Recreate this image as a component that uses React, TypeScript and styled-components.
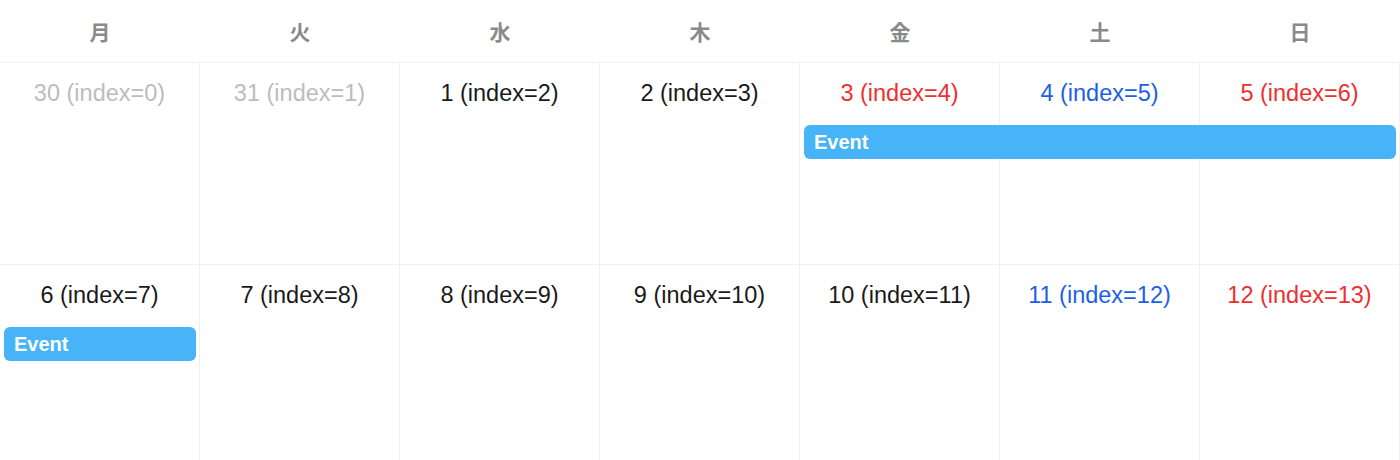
import React from 'react';
import styled, { createGlobalStyle } from 'styled-components';

type Tone = 'muted' | 'normal' | 'sat' | 'sun';

interface DayInfo {
    day: number,
    tone: Tone
}

interface EventInfo {
    start: number,
    span: number,
    title: string
}

const GlobalStyle = createGlobalStyle`
    html, body {
        margin: 0;
        padding: 0;
        background: #ffffff;
    }
    body {
        font-family: "Liberation Sans", Arial, "Noto Sans CJK JP", sans-serif;
    }
`

const Calendar = styled.div`
    width: 1400px;
`

const HeaderRow = styled.div`
    display: grid;
    grid-template-columns: repeat(7, 1fr);
    height: 62px;
    border-bottom: 1px solid #f0f0f0;
`

const WeekdayLabel = styled.div`
    display: flex;
    align-items: center;
    justify-content: center;
    font-family: "Noto Sans CJK JP", "Liberation Sans", sans-serif;
    font-size: 21px;
    font-weight: 700;
    color: #8a8a8a;
`

const WeekRow = styled.div`
    display: grid;
    grid-template-columns: repeat(7, 1fr);
    grid-template-rows: 62px 34px 1fr;
    height: 201px;
    border-bottom: 1px solid #f0f0f0;
`

const DayCell = styled.div<{ $col: number }>`
    grid-row: 1 / -1;
    grid-column: ${p => p.$col};
    border-right: 1px solid #f0f0f0;
    padding-top: 17px;
    text-align: center;
`

const toneColor: Record<Tone, string> = {
    muted: '#bcbcbc',
    normal: '#1a1a1a',
    sat: '#1c5fe6',
    sun: '#ee2f2f'
}

const DayNumber = styled.span<{ $tone: Tone }>`
    font-size: 23.5px;
    color: ${p => toneColor[p.$tone]};
`

const EventBar = styled.div<{ $start: number, $span: number }>`
    grid-row: 2;
    grid-column: ${p => p.$start} / span ${p => p.$span};
    z-index: 1;
    margin: 0 4px;
    background: #46b4f6;
    border-radius: 6px;
    color: #ffffff;
    font-size: 20px;
    font-weight: 700;
    line-height: 34px;
    padding-left: 10px;
`

const weekdays = ['月', '火', '水', '木', '金', '土', '日'];

const weeks: { days: DayInfo[], events: EventInfo[] }[] = [
    {
        days: [
            { day: 30, tone: 'muted' },
            { day: 31, tone: 'muted' },
            { day: 1, tone: 'normal' },
            { day: 2, tone: 'normal' },
            { day: 3, tone: 'sun' },
            { day: 4, tone: 'sat' },
            { day: 5, tone: 'sun' }
        ],
        events: [{ start: 5, span: 3, title: 'Event' }]
    },
    {
        days: [
            { day: 6, tone: 'normal' },
            { day: 7, tone: 'normal' },
            { day: 8, tone: 'normal' },
            { day: 9, tone: 'normal' },
            { day: 10, tone: 'normal' },
            { day: 11, tone: 'sat' },
            { day: 12, tone: 'sun' }
        ],
        events: [{ start: 1, span: 1, title: 'Event' }]
    }
]

const App: React.FC = () => {
    return (
        <Calendar>
            <GlobalStyle />
            <HeaderRow>
                {weekdays.map(w => (
                    <WeekdayLabel key={w}>{w}</WeekdayLabel>
                ))}
            </HeaderRow>
            {weeks.map((week, wi) => (
                <WeekRow key={wi}>
                    {week.days.map((d, di) => (
                        <DayCell key={di} $col={di + 1}>
                            <DayNumber $tone={d.tone}>
                                {d.day} (index={wi * 7 + di})
                            </DayNumber>
                        </DayCell>
                    ))}
                    {week.events.map((ev, ei) => (
                        <EventBar key={ei} $start={ev.start} $span={ev.span}>
                            {ev.title}
                        </EventBar>
                    ))}
                </WeekRow>
            ))}
        </Calendar>
    )
}

export default App;
